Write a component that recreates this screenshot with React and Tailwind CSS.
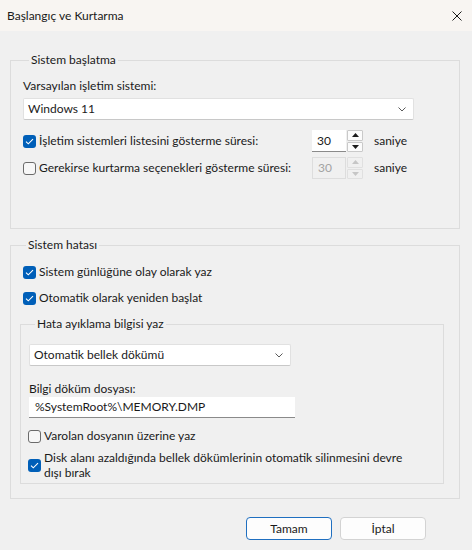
import React from "react";

const FONT = { fontFamily: 'Lato, "Noto Sans", sans-serif' };

function Check({ checked }) {
  if (checked) {
    return (
      <span className="w-[13px] h-[13px] rounded-[3px] bg-[#005fb8] flex items-center justify-center shrink-0">
        <svg width="9" height="7" viewBox="0 0 9 7" fill="none">
          <path d="M1 3.6 L3.3 5.8 L8 1.2" stroke="#ffffff" strokeWidth="1.1" />
        </svg>
      </span>
    );
  }
  return (
    <span className="w-[13px] h-[13px] rounded-[3px] border border-[#6b6b6b] bg-[#f7f7f7] shrink-0" />
  );
}

function Chevron() {
  return (
    <svg width="8" height="5" viewBox="0 0 8 5" fill="none">
      <path d="M0.5 0.5 L4 4 L7.5 0.5" stroke="#5a5a5a" strokeWidth="1" />
    </svg>
  );
}

function Combo({ text, className }) {
  return (
    <div
      className={
        "h-[22px] bg-white border border-[#e1e1e1] border-b-[#c8c8c8] rounded-[2px] flex items-center justify-between pl-[4px] pr-[7px] " +
        className
      }
    >
      <span className="leading-[16px]">{text}</span>
      <Chevron />
    </div>
  );
}

function Tri({ up, color }) {
  return (
    <svg width="7" height="4" viewBox="0 0 7 4">
      {up ? (
        <path d="M0 4 L3.5 0 L7 4 Z" fill={color} />
      ) : (
        <path d="M0 0 L3.5 4 L7 0 Z" fill={color} />
      )}
    </svg>
  );
}

function Spinner({ disabled }) {
  return (
    <div className="flex h-[22px] gap-[1px]">
      <div
        className={
          "w-[34px] h-[22px] flex items-center pl-[5px] leading-[16px] " +
          (disabled
            ? "bg-[#f0f0f0] border border-[#dddddd] text-[#a3a3a3]"
            : "bg-white border-b border-[#8a8a8a]")
        }
      >
        30
      </div>
      <div className="flex flex-col gap-[1px] w-[16px]">
        <div
          className={
            "h-[10.5px] flex items-center justify-center border rounded-[1px] " +
            (disabled ? "border-[#e0e0e0] bg-[#f0f0f0]" : "border-[#c9c9c9] bg-[#fbfbfb]")
          }
        >
          <Tri up color={disabled ? "#c6c6c6" : "#1a1a1a"} />
        </div>
        <div
          className={
            "h-[10.5px] flex items-center justify-center border rounded-[1px] " +
            (disabled ? "border-[#e0e0e0] bg-[#f0f0f0]" : "border-[#c9c9c9] bg-[#fbfbfb]")
          }
        >
          <Tri color={disabled ? "#c6c6c6" : "#1a1a1a"} />
        </div>
      </div>
    </div>
  );
}

export default function App() {
  return (
    <div
      className="w-[472px] h-[550px] bg-[#f0f0f0] flex flex-col text-[12px] text-[#1a1a1a] overflow-hidden"
      style={FONT}
    >
      {/* Title bar */}
      <div className="h-[31px] bg-[#f8f5f2] flex items-center justify-between pl-[7px] pr-[10px] shrink-0">
        <span className="leading-[16px]">Başlangıç ve Kurtarma</span>
        <svg width="10" height="10" viewBox="0 0 10 10" fill="none">
          <path d="M0.5 0.5 L9.5 9.5 M9.5 0.5 L0.5 9.5" stroke="#1a1a1a" strokeWidth="1" />
        </svg>
      </div>

      <div className="flex flex-col px-[10px] pt-[21px]">
        {/* Group 1 */}
        <fieldset className="border border-[#dcdcdc] w-[450px] pl-[12px] pb-[49px] pt-[10px]">
          <legend className="ml-[6px] px-[2px] leading-[16px]">Sistem başlatma</legend>
          <div className="flex flex-col">
            <div className="leading-[16px]">Varsayılan işletim sistemi:</div>
            <Combo text="Windows 11" className="mt-[4px] w-[391px]" />
            <div className="mt-[10px] h-[22px] flex items-center">
              <div className="w-[289px] flex items-center gap-[3px] whitespace-nowrap">
                <Check checked />
                <span className="leading-[16px]">İşletim sistemleri listesini gösterme süresi:</span>
              </div>
              <Spinner />
              <span className="ml-[11px] leading-[16px]">saniye</span>
            </div>
            <div className="mt-[5px] h-[22px] flex items-center">
              <div className="w-[289px] flex items-center gap-[3px] whitespace-nowrap">
                <Check />
                <span className="leading-[16px]">Gerekirse kurtarma seçenekleri gösterme süresi:</span>
              </div>
              <Spinner disabled />
              <span className="ml-[11px] leading-[16px]">saniye</span>
            </div>
          </div>
        </fieldset>

        {/* Group 2 */}
        <fieldset className="mt-[8px] border border-[#dcdcdc] w-[450px] pl-[9px] pt-[11px] pb-[14px]">
          <legend className="ml-[6px] px-[2px] leading-[16px]">Sistem hatası</legend>
          <div className="flex flex-col">
            <div className="h-[16px] flex items-center gap-[3px] pl-[3px]">
              <Check checked />
              <span className="leading-[16px]">Sistem günlüğüne olay olarak yaz</span>
            </div>
            <div className="mt-[10px] h-[16px] flex items-center gap-[3px] pl-[3px]">
              <Check checked />
              <span className="leading-[16px]">Otomatik olarak yeniden başlat</span>
            </div>

            <fieldset className="mt-[10px] border border-[#dcdcdc] w-[424px] pl-[8px] pt-[12px] pb-[3px]">
              <legend className="ml-[6px] px-[2px] leading-[16px]">Hata ayıklama bilgisi yaz</legend>
              <div className="flex flex-col">
                <Combo text="Otomatik bellek dökümü" className="w-[262px]" />
                <div className="mt-[15px] leading-[16px]">Bilgi döküm dosyası:</div>
                <div className="h-[21px] w-[266px] bg-white border-b border-[#8a8a8a] flex items-center pl-[6px] leading-[16px]">
                  %SystemRoot%\MEMORY.DMP
                </div>
                <div className="mt-[10px] h-[16px] flex items-center gap-[3px] -ml-[1px]">
                  <Check />
                  <span className="leading-[16px]">Varolan dosyanın üzerine yaz</span>
                </div>
                <div className="mt-[6px] flex items-center gap-[3px] -ml-[1px]">
                  <Check checked />
                  <span className="leading-[15px] whitespace-nowrap">
                    Disk alanı azaldığında bellek dökümlerinin otomatik silinmesini devre
                    <br />
                    dışı bırak
                  </span>
                </div>
              </div>
            </fieldset>
          </div>
        </fieldset>

        {/* Buttons */}
        <div className="mt-[18px] flex justify-end gap-[8px] pr-[36px]">
          <button className="w-[86px] h-[23px] rounded-[4px] border border-[#1f6fc0] bg-[#fdfdfd] leading-[16px] text-[#1a1a1a]">
            Tamam
          </button>
          <button className="w-[86px] h-[23px] rounded-[4px] border border-[#d3d3d3] bg-[#fdfdfd] leading-[16px] text-[#1a1a1a]">
            İptal
          </button>
        </div>
      </div>
    </div>
  );
}
